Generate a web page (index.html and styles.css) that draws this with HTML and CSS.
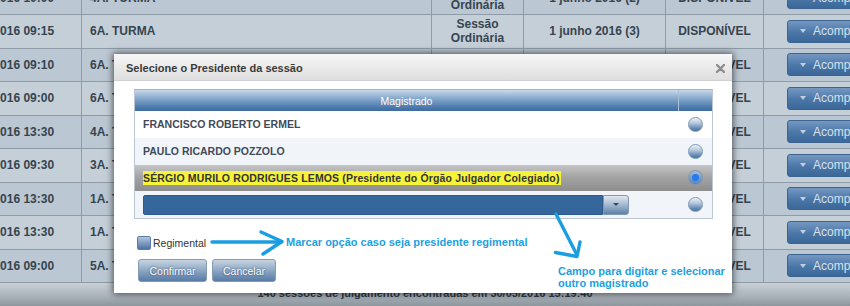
FILE: index.html
```html
<!DOCTYPE html>
<html lang="pt">
<head>
<meta charset="utf-8">
<title>Sessões</title>
<link rel="stylesheet" href="styles.css">
</head>
<body>
<div class="page">
  <div class="grid">
    <div class="row alt">
      <div class="cell">01/06/2016 10:00</div>
      <div class="cell">4A. TURMA</div>
      <div class="cell center">Sessão<br>Ordinária</div>
      <div class="cell center">1 junho 2016 (2)</div>
      <div class="cell center">DISPONÍVEL</div>
      <div class="cell act"><span class="acomp"><span class="caret"></span>Acompanhar</span></div>
    </div>
    <div class="row">
      <div class="cell">01/06/2016 09:15</div>
      <div class="cell">6A. TURMA</div>
      <div class="cell center">Sessão<br>Ordinária</div>
      <div class="cell center">1 junho 2016 (3)</div>
      <div class="cell center">DISPONÍVEL</div>
      <div class="cell act"><span class="acomp"><span class="caret"></span>Acompanhar</span></div>
    </div>
    <div class="row alt">
      <div class="cell">01/06/2016 09:10</div>
      <div class="cell">6A. TURMA</div>
      <div class="cell center">Sessão Ordinária</div>
      <div class="cell center">1 junho 2016 (3)</div>
      <div class="cell center">DISPONÍVEL</div>
      <div class="cell act"><span class="acomp"><span class="caret"></span>Acompanhar</span></div>
    </div>
    <div class="row">
      <div class="cell">01/06/2016 09:00</div>
      <div class="cell">6A. TURMA</div>
      <div class="cell center">Sessão<br>Ordinária</div>
      <div class="cell center">1 junho 2016 (3)</div>
      <div class="cell center">DISPONÍVEL</div>
      <div class="cell act"><span class="acomp"><span class="caret"></span>Acompanhar</span></div>
    </div>
    <div class="row alt">
      <div class="cell">01/06/2016 13:30</div>
      <div class="cell">4A. TURMA</div>
      <div class="cell center">Sessão<br>Ordinária</div>
      <div class="cell center">1 junho 2016 (3)</div>
      <div class="cell center">DISPONÍVEL</div>
      <div class="cell act"><span class="acomp"><span class="caret"></span>Acompanhar</span></div>
    </div>
    <div class="row">
      <div class="cell">01/06/2016 09:30</div>
      <div class="cell">3A. TURMA</div>
      <div class="cell center">Sessão<br>Ordinária</div>
      <div class="cell center">1 junho 2016 (3)</div>
      <div class="cell center">DISPONÍVEL</div>
      <div class="cell act"><span class="acomp"><span class="caret"></span>Acompanhar</span></div>
    </div>
    <div class="row alt">
      <div class="cell">01/06/2016 13:30</div>
      <div class="cell">1A. TURMA</div>
      <div class="cell center">Sessão<br>Ordinária</div>
      <div class="cell center">1 junho 2016 (3)</div>
      <div class="cell center">DISPONÍVEL</div>
      <div class="cell act"><span class="acomp"><span class="caret"></span>Acompanhar</span></div>
    </div>
    <div class="row">
      <div class="cell">01/06/2016 13:30</div>
      <div class="cell">1A. TURMA</div>
      <div class="cell center">Sessão<br>Ordinária</div>
      <div class="cell center">1 junho 2016 (3)</div>
      <div class="cell center">DISPONÍVEL</div>
      <div class="cell act"><span class="acomp"><span class="caret"></span>Acompanhar</span></div>
    </div>
    <div class="row alt">
      <div class="cell">01/06/2016 09:00</div>
      <div class="cell">5A. TURMA</div>
      <div class="cell center">Sessão<br>Ordinária</div>
      <div class="cell center">1 junho 2016 (3)</div>
      <div class="cell center">DISPONÍVEL</div>
      <div class="cell act"><span class="acomp"><span class="caret"></span>Acompanhar</span></div>
    </div>
  </div>
  <div class="footer">140 sessões de julgamento encontradas em 30/05/2016 15:19:40</div>
</div>

<div class="dialog">
  <div class="dlg-title">
    <span>Selecione o Presidente da sessão</span>
    <svg class="close" width="9" height="9" viewBox="0 0 9 9"><path d="M1 1 L8 8 M8 1 L1 8" stroke="#8c8c8c" stroke-width="2.4" stroke-linecap="round"/></svg>
  </div>
  <div class="dlg-body">
    <div class="mtable">
      <div class="mhead"><div class="mh">Magistrado</div><div class="mh"></div></div>
      <div class="mrow white">
        <div class="name">FRANCISCO ROBERTO ERMEL</div>
        <div class="rcell"><span class="radio"></span></div>
      </div>
      <div class="mrow light">
        <div class="name">PAULO RICARDO POZZOLO</div>
        <div class="rcell"><span class="radio"></span></div>
      </div>
      <div class="mrow sel">
        <div class="name"><span class="hl">SÉRGIO MURILO RODRIGUES LEMOS (Presidente do Órgão Julgador Colegiado)</span></div>
        <div class="rcell"><span class="radio on"></span></div>
      </div>
      <div class="mrow light">
        <div class="name"><div class="combo"><span class="combo-field"></span><span class="combo-btn"><span class="combo-caret"></span></span></div></div>
        <div class="rcell"><span class="radio"></span></div>
      </div>
    </div>
    <div class="opts">
      <span class="check"></span><span class="opt-label">Regimental</span>
    </div>
    <div class="btns">
      <span class="btn w1">Confirmar</span>
      <span class="btn w2">Cancelar</span>
    </div>
  </div>
  <svg class="annot" width="618" height="239" viewBox="0 0 618 239">
    <g stroke="#1a9ee2" stroke-width="3.4" stroke-linecap="round" stroke-linejoin="round" fill="none">
      <path d="M98 188 L167 188"/>
      <path d="M147 178 L168 187.5 L149 200"/>
      <path d="M442 160 L462.5 200"/>
      <path d="M441.5 198.5 L463 202.5 L466 188"/>
    </g>
  </svg>
  <div class="note n1">Marcar opção caso seja presidente regimental</div>
  <div class="note n2">Campo para digitar e selecionar<br>outro magistrado</div>
</div>
</body>
</html>
```

FILE: styles.css
```css
* { box-sizing: border-box; }
html, body { margin: 0; padding: 0; }
body {
  width: 850px;
  height: 306px;
  overflow: hidden;
  position: relative;
  font-family: "Liberation Sans", Arial, sans-serif;
  background: #bcc7d1;
}
.page { display: flex; flex-direction: column; height: 306px; }
.grid { margin-top: -18.5px; margin-left: -48px; width: 960px; }
.row {
  display: grid;
  grid-template-columns: 130px 350px 92px 142px 98px 148px;
  height: 33.5px;
  border-bottom: 1px solid #8f9ca8;
  background: #c5cfd8;
}
.row.alt { background: #bbc7d2; }
.cell {
  display: flex;
  align-items: center;
  border-right: 1px solid #8f9ca8;
  font-size: 12px;
  font-weight: bold;
  color: #36444f;
  padding-left: 8px;
  line-height: 14px;
  white-space: nowrap;
  overflow: hidden;
}
.cell.center { justify-content: center; text-align: center; padding-left: 0; }
.cell.act { border-right: 0; padding-left: 23px; }
.acomp {
  display: flex;
  align-items: center;
  gap: 7px;
  height: 23px;
  width: 110px;
  padding-left: 12px;
  border: 1px solid #3b6491;
  border-radius: 3px;
  background: linear-gradient(#7598c1, #4a76a8 55%, #3b6898);
  color: #d6e1ec;
  font-size: 12px;
  font-weight: normal;
}
.caret {
  width: 0; height: 0;
  border-left: 3px solid transparent;
  border-right: 3px solid transparent;
  border-top: 4px solid #bfd0e2;
}
.footer {
  flex: 1;
  background: linear-gradient(#c9d0d6, #a9b1b9 60%, #8c949c);
  text-align: center;
  font-size: 11px;
  font-weight: bold;
  color: #2e3a46;
  line-height: 20px;
}

.dialog {
  position: absolute;
  left: 114px;
  top: 54px;
  width: 618px;
  height: 239px;
  background: #fff;
  box-shadow: 0 0 7px 1px rgba(0, 0, 0, 0.6);
  display: flex;
  flex-direction: column;
}
.dlg-title {
  height: 27px;
  flex: none;
  display: flex;
  align-items: center;
  justify-content: space-between;
  padding: 2px 7px 0 12px;
  background: linear-gradient(#f7f7f7, #dedede);
  border-bottom: 1px solid #d0d0d0;
  font-size: 11px;
  font-weight: bold;
  color: #3a3a3a;
}
.dlg-body { padding: 8px 19px 0 20px; flex: 1; }
.mtable { border: 1px solid #bcc7d3; border-top-color: #9fb3c8; }
.mhead {
  display: grid;
  grid-template-columns: 1fr 34px;
  height: 21px;
  background: linear-gradient(#c9d9ea 0%, #8daed0 35%, #4f7cae 80%, #3f6c9f 100%);
}
.mh {
  display: flex;
  align-items: center;
  justify-content: center;
  color: #fff;
  font-size: 10.5px;
}
.mh + .mh { border-left: 1px solid #a9c0d8; }
.mrow {
  display: grid;
  grid-template-columns: 1fr 34px;
  height: 26.75px;
  align-items: center;
}
.mrow.white { background: #fff; }
.mrow.light { background: #f1f4f9; }
.mrow.sel { background: linear-gradient(#c6c6c6, #a4a4a4 45%, #8e8e8e); }
.name {
  padding-left: 8px;
  font-size: 10.5px;
  font-weight: bold;
  color: #3f4b59;
  white-space: nowrap;
}
.hl { background: #f6f43a; color: #333; padding: 1px 1px 1px 0; letter-spacing: 0.15px; }
.rcell { display: flex; justify-content: center; align-items: center; }
.radio {
  width: 15px;
  height: 15px;
  border-radius: 50%;
  border: 1px solid #7d97b5;
  background: linear-gradient(#eef2f7, #b4c7dc 40%, #5a82b0 85%, #4d74a3);
  display: flex;
  align-items: center;
  justify-content: center;
}
.radio.on { background: linear-gradient(#a9bdd3, #7e9ec2 50%, #5f84b0); }
.radio.on::after {
  content: "";
  width: 7px;
  height: 7px;
  border-radius: 50%;
  background: #2479f4;
}
.combo { display: flex; width: 486px; height: 20px; }
.combo-field {
  flex: 1;
  background: #35669c;
  border: 1px solid #2e5a8b;
  border-radius: 2px 0 0 2px;
}
.combo-btn {
  width: 26px;
  border: 1px solid #8097b1;
  border-radius: 0 3px 3px 0;
  background: linear-gradient(#e0e7ef, #a9bdd3 45%, #5d80a9);
  display: flex;
  align-items: center;
  justify-content: center;
}
.combo-caret {
  width: 0; height: 0;
  border-left: 3px solid transparent;
  border-right: 3px solid transparent;
  border-top: 3px solid #34485e;
}
.opts {
  display: flex;
  align-items: center;
  gap: 2px;
  margin-top: 17px;
  margin-left: 3px;
  height: 14px;
}
.check {
  width: 14px;
  height: 14px;
  border: 1px solid #5a7ba3;
  border-radius: 2px;
  background: linear-gradient(#b4c6db, #7d9bbf 50%, #4c74a4);
}
.opt-label { font-size: 10.5px; color: #333; }
.btns { display: flex; gap: 5px; margin-top: 9px; margin-left: 4px; }
.btn {
  height: 23px;
  display: flex;
  align-items: center;
  justify-content: center;
  border: 1px solid #8499b3;
  border-radius: 3px;
  background: linear-gradient(#c7d4e2, #93abc6 45%, #577ba6);
  color: #fff;
  font-size: 10.5px;
  text-shadow: 0 0 2px rgba(30, 50, 80, 0.9);
}
.btn.w1 { width: 69px; }
.btn.w2 { width: 64px; }
.annot { position: absolute; left: 0; top: 0; pointer-events: none; }
.note {
  position: absolute;
  font-size: 11px;
  font-weight: bold;
  color: #1ca0e3;
  white-space: nowrap;
}
.n1 { left: 172px; top: 181px; line-height: 14px; }
.n2 { left: 444px; top: 210.5px; line-height: 12.5px; }
```
